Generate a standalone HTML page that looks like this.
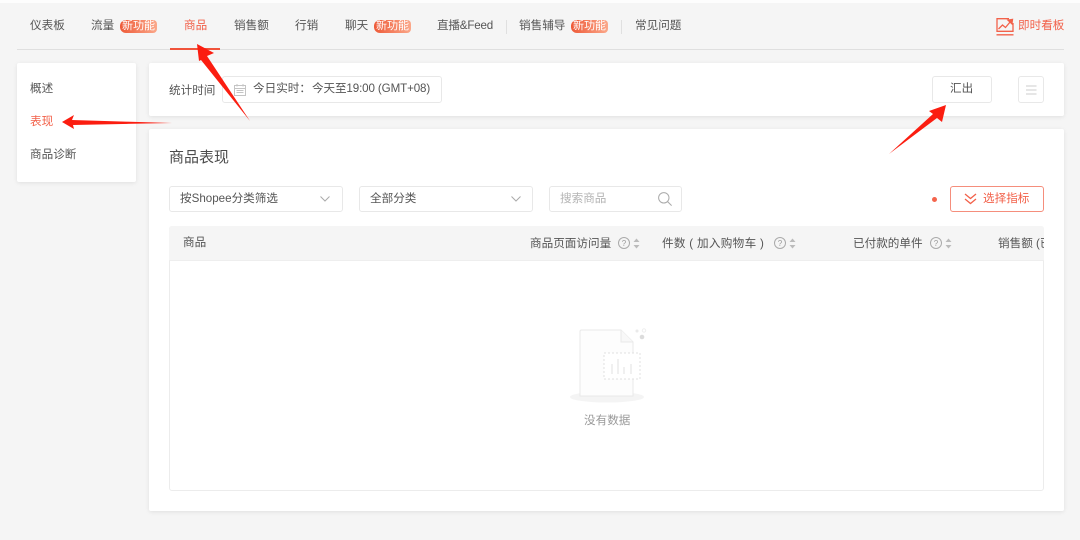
<!DOCTYPE html>
<html>
<head>
<meta charset="utf-8">
<style>
html,body{margin:0;padding:0;background:#f5f5f5}
body{width:1080px;height:540px;overflow:hidden;position:relative;font-family:"Liberation Sans","Noto Sans CJK SC",sans-serif;font-size:11.6px;color:#555}
#wrap{position:absolute;left:0;top:0;width:1080px;height:540px;filter:blur(.3px)}
#top{position:absolute;left:0;top:0;width:1080px;height:3px;background:#fdfdfd}
.t{position:absolute;white-space:nowrap;line-height:16px}
.b{position:absolute;box-sizing:border-box}
.card{background:#fff;border-radius:2px;box-shadow:0 1px 4px rgba(0,0,0,.09)}
.box{background:#fff;border:1px solid #e8e8e8;border-radius:3px}
.badge{position:absolute;height:13px;width:37px;border-radius:6px 4px 4px 6px;background:linear-gradient(90deg,#ee5a38,#fba88a);color:#fff;font-size:11px;line-height:13px;text-align:center;white-space:nowrap;overflow:hidden}
.o{color:#f2614a}
svg{position:absolute;overflow:visible}
</style>
</head>
<body>
<div id="wrap">
<div id="top"></div>
<div class="b" style="left:17px;top:49px;width:1047px;height:1px;background:#dfdfdf"></div>
<div class="b" style="left:170px;top:48px;width:50px;height:2px;background:#f0533a"></div>

<div class="t" style="left:30px;top:18px">仪表板</div>
<div class="t" style="left:91px;top:18px">流量</div>
<div class="badge" style="left:120px;top:20px">新功能</div>
<div class="t o" style="left:184px;top:18px">商品</div>
<div class="t" style="left:234px;top:18px">销售额</div>
<div class="t" style="left:295px;top:18px">行销</div>
<div class="t" style="left:345px;top:18px">聊天</div>
<div class="badge" style="left:374px;top:20px">新功能</div>
<div class="t" style="left:437px;top:18px;letter-spacing:-.2px">直播&amp;Feed</div>
<div class="b" style="left:506px;top:20px;width:1px;height:14px;background:#e0e0e0"></div>
<div class="t" style="left:519px;top:18px">销售辅导</div>
<div class="badge" style="left:571px;top:20px">新功能</div>
<div class="b" style="left:621px;top:20px;width:1px;height:14px;background:#e0e0e0"></div>
<div class="t" style="left:635px;top:18px">常见问题</div>
<svg style="left:996px;top:18px" width="18" height="18" viewBox="0 0 18 18" fill="none" stroke="#f2614a" stroke-width="1.3">
<path d="M13 .7H1v12.6h16V5"/><path d="M0.5 16.8h17"/><path d="M2.5 11l4-4 3 2.500 5-6"/><path d="M12 2.200l4.500-.8-.6 4.400z" fill="#f2614a"/>
</svg>
<div class="t o" style="left:1018px;top:18px">即时看板</div>

<div class="b card" style="left:17px;top:63px;width:119px;height:119px"></div>
<div class="t" style="left:30px;top:81px">概述</div>
<div class="t o" style="left:30px;top:114px">表现</div>
<div class="t" style="left:30px;top:147px">商品诊断</div>

<div class="b card" style="left:149px;top:63px;width:915px;height:53px"></div>
<div class="t" style="left:169px;top:83px">统计时间</div>
<div class="b box" style="left:222px;top:76px;width:220px;height:27px"></div>
<svg style="left:234px;top:84px" width="12" height="12" viewBox="0 0 12 12" fill="none" stroke="#c4c4c4" stroke-width="1">
<rect x=".5" y="1.500" width="11" height="10"/><path d="M.5 4.500h11M3 0v2.500M9 0v2.500M2.500 6.500h7M2.500 8.500h7"/>
</svg>
<div class="t" style="left:253px;top:81px">今日实时：</div>
<div class="t" style="left:312px;top:81px;letter-spacing:-.12px">今天至19:00 (GMT+08)</div>
<div class="b box" style="left:932px;top:76px;width:60px;height:27px"></div>
<div class="t" style="left:950px;top:81px">汇出</div>
<div class="b box" style="left:1018px;top:76px;width:26px;height:27px"></div>
<svg style="left:1026px;top:84px" width="11" height="12" viewBox="0 0 11 12" fill="none" stroke="#ccc" stroke-width="1">
<path d="M0 2h10.500M0 6h10.500M0 10h10.500"/>
</svg>

<div class="b card" style="left:149px;top:129px;width:915px;height:382px"></div>
<div class="t" style="left:169px;top:149px;font-size:15px;line-height:18px;color:#4c4c4c">商品表现</div>

<div class="b box" style="left:169px;top:186px;width:174px;height:26px"></div>
<div class="t" style="left:180px;top:191px">按Shopee分类筛选</div>
<svg style="left:320px;top:196px" width="10" height="6" viewBox="0 0 10 6" fill="none" stroke="#aaa"><path d="M.5.500l4.500 4.500L9.500.500"/></svg>
<div class="b box" style="left:359px;top:186px;width:174px;height:26px"></div>
<div class="t" style="left:370px;top:191px">全部分类</div>
<svg style="left:511px;top:196px" width="10" height="6" viewBox="0 0 10 6" fill="none" stroke="#aaa"><path d="M.5.500l4.500 4.500L9.500.500"/></svg>
<div class="b box" style="left:549px;top:186px;width:133px;height:26px"></div>
<div class="t" style="left:560px;top:191px;color:#b4b4b4">搜索商品</div>
<svg style="left:658px;top:192px" width="14" height="14" viewBox="0 0 14 14" fill="none" stroke="#aaa"><circle cx="5.800" cy="5.800" r="5.200"/><path d="M9.600 9.600l4 4"/></svg>
<div class="b" style="left:932px;top:197px;width:5px;height:5px;border-radius:50%;background:#f4644c"></div>
<div class="b" style="left:950px;top:186px;width:94px;height:26px;background:#fff;border:1px solid #f58e7c;border-radius:3px"></div>
<svg style="left:964px;top:193px" width="13" height="12" viewBox="0 0 13 12" fill="none" stroke="#f2614a" stroke-width="1.300"><path d="M1 1l5.500 4.500L12 1M1 6l5.500 4.500L12 6"/></svg>
<div class="t o" style="left:983px;top:191px">选择指标</div>

<div class="b" style="left:169px;top:226px;width:875px;height:265px;background:#fff;border:1px solid #ececec;border-radius:3px"></div>
<div class="b" style="left:169px;top:226px;width:875px;height:35px;background:#f5f5f5;border-bottom:1px solid #eee;border-radius:3px 3px 0 0;overflow:hidden">
<div class="t" style="left:14px;top:9px">商品</div>
<div class="t" style="left:361px;top:10px">商品页面访问量</div>
<div class="t" style="left:493px;top:10px;letter-spacing:.3px">件数 ( 加入购物车 )</div>
<div class="t" style="left:684px;top:10px">已付款的单件</div>
<div class="t" style="left:829px;top:10px">销售额 (已付款)</div>
<svg style="left:449px;top:11px" width="22" height="13" viewBox="0 0 22 13" fill="none" stroke="#aaa"><circle cx="6" cy="6" r="5.500"/><text x="6" y="9" font-size="8" text-anchor="middle" fill="#999" stroke="none">?</text><path d="M15.500 5l3-3.500 3 3.500z M15.500 8l3 3.500 3-3.500z" fill="#bbb" stroke="none"/></svg>
<svg style="left:605px;top:11px" width="22" height="13" viewBox="0 0 22 13" fill="none" stroke="#aaa"><circle cx="6" cy="6" r="5.500"/><text x="6" y="9" font-size="8" text-anchor="middle" fill="#999" stroke="none">?</text><path d="M15.500 5l3-3.500 3 3.500z M15.500 8l3 3.500 3-3.500z" fill="#bbb" stroke="none"/></svg>
<svg style="left:761px;top:11px" width="22" height="13" viewBox="0 0 22 13" fill="none" stroke="#aaa"><circle cx="6" cy="6" r="5.500"/><text x="6" y="9" font-size="8" text-anchor="middle" fill="#999" stroke="none">?</text><path d="M15.500 5l3-3.500 3 3.500z M15.500 8l3 3.500 3-3.500z" fill="#bbb" stroke="none"/></svg>
</div>

<svg style="left:550px;top:320px" width="120" height="90" viewBox="0 0 120 90" fill="none">
<ellipse cx="57" cy="77" rx="37" ry="5.500" fill="#f4f4f4"/>
<path d="M30 11.500a1.500 1.500 0 0 1 1.500-1.500H71l12 12v54H30z" fill="#fdfdfd" stroke="#e9e9e9"/>
<path d="M71 10v12h12" fill="#f8f8f8" stroke="#e9e9e9"/>
<rect x="54" y="33" width="36" height="26" fill="#fff" stroke="#e0e0e0" stroke-dasharray="2 2"/>
<path d="M62 44v10M68 39v15M74 47v7M81 44v10" stroke="#e2e2e2"/>
<circle cx="92" cy="17" r="2.300" fill="#dcdcdc"/><circle cx="87" cy="11" r="1.500" fill="#eaeaea"/><circle cx="94" cy="10.500" r="1.700" stroke="#eee"/>
</svg>
<div class="t" style="left:584px;top:413px;color:#999">没有数据</div>

<svg style="left:0;top:0" width="1080" height="540" viewBox="0 0 1080 540">
<path fill="#fb1d10" d="M197 44L214 53L207 56L250 121L201 60L199 61Z"/>
<path fill="#fb1d10" d="M62 122L74 115L72 120L172 123L73 125L74 129Z"/>
<path fill="#fb1d10" d="M946 105L942 122L937 118L889 154L933 114L929 111Z"/>
</svg>
</div>
</body>
</html>
